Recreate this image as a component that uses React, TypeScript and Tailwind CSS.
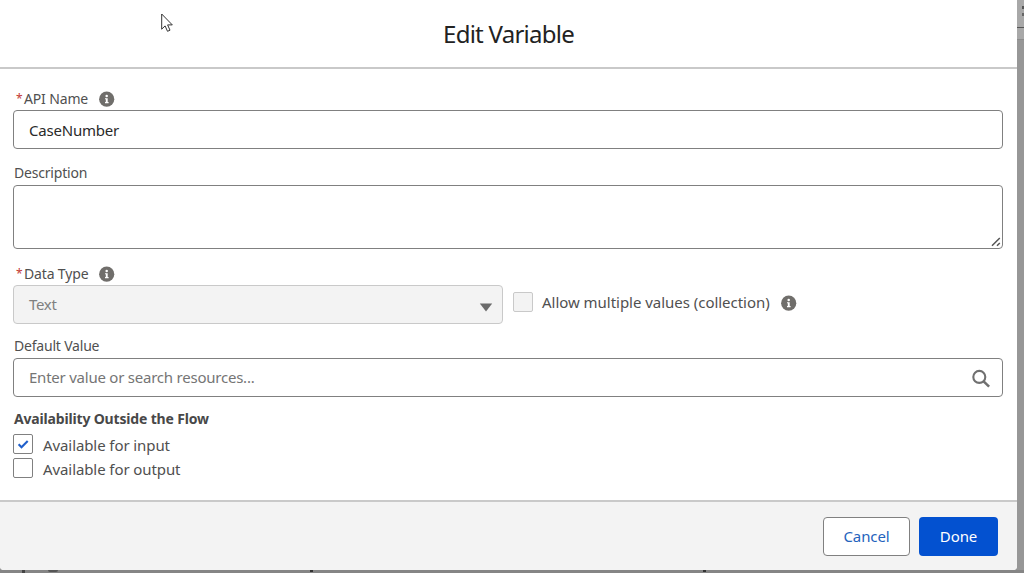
import { useState } from "react";
import type { ReactNode } from "react";

function InfoIcon() {
  return (
    <svg viewBox="0 0 16 16" className="h-4 w-4 shrink-0" aria-hidden="true">
      <circle cx="7.7" cy="8.2" r="7.6" fill="#706e6b" />
      <circle cx="7.7" cy="5" r="1.25" fill="#fff" />
      <path d="M6 7.2h2.7v3.9h.9v1.1H6v-1.1h.8V8.3H6z" fill="#fff" />
    </svg>
  );
}

function FieldLabel({
  children,
  required,
  info,
  className,
}: {
  children: ReactNode;
  required?: boolean;
  info?: boolean;
  className: string;
}) {
  return (
    <div className={`flex items-center text-sm text-[#505050] ${className}`}>
      {required && <span className="ml-[3px] w-2 text-xs text-[#c23934]">*</span>}
      <span className={`w-[75px] whitespace-nowrap ${required ? "" : "ml-px"}`}>{children}</span>
      {info && <InfoIcon />}
    </div>
  );
}

function CheckBox({
  checked,
  disabled,
  onChange,
}: {
  checked: boolean;
  disabled?: boolean;
  onChange?: () => void;
}) {
  return (
    <button
      type="button"
      role="checkbox"
      aria-checked={checked}
      disabled={disabled}
      onClick={onChange}
      className={[
        "flex h-5 w-5 shrink-0 items-center justify-center rounded-[2px] border",
        disabled ? "border-[#c9c9c9] bg-[#f3f3f3]" : "border-[#808080] bg-white",
      ].join(" ")}
    >
      {checked && (
        <svg viewBox="0 0 12 10" className="h-[10px] w-3" fill="none">
          <path d="M1.6 5.3 4.5 8.2 10.7 2" stroke="#1f5fcb" strokeWidth="2.1" />
        </svg>
      )}
    </button>
  );
}

export default function App() {
  const [name, setName] = useState("CaseNumber");
  const [description, setDescription] = useState("");
  const [defaultValue, setDefaultValue] = useState("");
  const [forInput, setForInput] = useState(true);
  const [forOutput, setForOutput] = useState(false);

  return (
    <div className="relative h-[573px] w-[1024px] overflow-hidden bg-[#979797] font-['Noto_Sans','Open_Sans',sans-serif]">
      {/* page behind the dialog */}
      <div className="absolute right-0 top-0 h-[40px] w-[7px] border-b border-[#8c8c8c] bg-[#a8a8a8]">
        <div className="absolute right-0 top-[6px] h-[3px] w-[2px] bg-[#555]" />
        <div className="absolute right-0 top-[13px] h-[3px] w-[2px] bg-[#666]" />
        <div className="absolute right-0 top-[27px] h-px w-[7px] bg-[#555]" />
      </div>
      <div className="absolute bottom-0 left-0 h-[3px] w-full bg-[#858585]">
        <div className="absolute left-[22px] top-0 h-[3px] w-[3px] bg-[#444]" />
        <div className="absolute left-[48px] top-0 h-[2px] w-[10px] rounded-b bg-[#555]" />
        <div className="absolute left-[310px] top-0 h-[2px] w-[3px] bg-[#333]" />
        <div className="absolute left-[703px] top-0 h-[2px] w-[3px] bg-[#333]" />
      </div>

      <div className="relative flex h-[570px] w-[1017px] flex-col overflow-hidden rounded-b-[4px] bg-white">
        <header className="flex h-[69px] shrink-0 items-center justify-center border-b-2 border-[#c9c9c9]">
          <h2 className="text-2xl tracking-[-0.75px] text-[#222]">Edit Variable</h2>
        </header>

        <main className="flex grow flex-col pl-[13px] pr-[14px] pt-[18px]">
          <FieldLabel required info className="h-[23px]">
            <span className="tracking-[-0.15px]">API Name</span>
          </FieldLabel>
          <input
            value={name}
            onChange={(e) => setName(e.target.value)}
            className="h-[39px] rounded-[4px] border border-[#808080] px-[15px] text-[15px] tracking-[-0.2px] text-[#2a2a2a] outline-none"
          />

          <FieldLabel className="mt-3 h-6">
            <span className="tracking-[-0.2px]">Description</span>
          </FieldLabel>
          <div className="relative h-16">
            <textarea
              value={description}
              onChange={(e) => setDescription(e.target.value)}
              className="block h-16 w-full resize-none rounded-[4px] border border-[#808080] px-[15px] py-2 text-[15px] outline-none"
            />
            <svg viewBox="0 0 10 10" className="absolute bottom-[2px] right-[2px] h-[10px] w-[10px]" fill="none">
              <path d="M1 8.8 8.8 1M6 8.8l2.8-2.8" stroke="#555" strokeWidth="1.5" />
            </svg>
          </div>

          <div className="mt-[14px] flex h-[61px]">
            <div className="w-[490px]">
              <FieldLabel required info className="h-[22px]">
                <span className="tracking-[-0.15px]">Data Type</span>
              </FieldLabel>
              <div className="flex h-[39px] items-center justify-between rounded-[4px] border border-[#c9c9c9] bg-[#f3f3f3] pl-[15px] pr-[9px] text-[15px] text-[#808080]">
                <span className="tracking-[-0.3px]">Text</span>
                <svg viewBox="0 0 14 9" className="mt-[5px] h-[9px] w-[14px]">
                  <path d="M.8.5h12.4L7 8.5z" fill="#6b6b6b" />
                </svg>
              </div>
            </div>
            <div className="ml-[10px] mt-[29px] flex h-5 items-center">
              <CheckBox checked={false} disabled />
              <span className="ml-[9px] mt-px w-[239px] whitespace-nowrap text-[15px] tracking-[-0.03px] text-[#505050]">
                Allow multiple values (collection)
              </span>
              <div className="mt-[2px]">
                <InfoIcon />
              </div>
            </div>
          </div>

          <FieldLabel className="mt-[10px] h-6">
            <span className="tracking-[-0.2px]">Default Value</span>
          </FieldLabel>
          <div className="flex h-[39px] items-center rounded-[4px] border border-[#808080] pl-[15px] pr-[11px]">
            <input
              value={defaultValue}
              onChange={(e) => setDefaultValue(e.target.value)}
              placeholder="Enter value or search resources..."
              className="grow text-[15px] tracking-[-0.23px] text-[#181818] outline-none placeholder:text-[#757575]"
            />
            <svg viewBox="0 0 20 20" className="mt-[3px] h-5 w-5" fill="none" stroke="#707070">
              <circle cx="8.3" cy="7.9" r="6" strokeWidth="2.1" />
              <path d="m12.6 12.3 5.5 5.4" strokeWidth="2.5" />
            </svg>
          </div>

          <h3 className="ml-px mt-[11px] h-[22px] text-sm leading-[22px] font-bold tracking-[-0.17px] text-[#484848]">
            Availability Outside the Flow
          </h3>
          <div className="mt-1 flex h-5 items-center">
            <CheckBox checked={forInput} onChange={() => setForInput(!forInput)} />
            <span className="ml-[10px] mt-[3px] text-[15px] tracking-[-0.09px] text-[#505050]">Available for input</span>
          </div>
          <div className="mt-1 flex h-5 items-center">
            <CheckBox checked={forOutput} onChange={() => setForOutput(!forOutput)} />
            <span className="ml-[10px] mt-[3px] text-[15px] tracking-[-0.09px] text-[#505050]">Available for output</span>
          </div>
        </main>

        <footer className="flex h-[70px] shrink-0 justify-end gap-[9px] border-t-2 border-[#c9c9c9] bg-[#f3f3f3] pr-[19px] pt-[15px] text-[15px]">
          <button type="button" className="h-[39px] w-[87px] rounded-[4px] border border-[#808080] bg-white tracking-[-0.1px] text-[#2463bd]">
            Cancel
          </button>
          <button type="button" className="h-[39px] w-[79px] rounded-[4px] bg-[#0351d0] tracking-[-0.1px] text-white">
            Done
          </button>
        </footer>
      </div>

      {/* mouse pointer */}
      <svg viewBox="0 0 12 20" className="absolute left-[161px] top-[13px] h-5 w-3">
        <path d="M.7 1v15.2l3.4-3.3 2.4 5.4 2.5-1.1-2.4-5.3h4.7z" fill="#fff" stroke="#333" strokeWidth="1" />
      </svg>
    </div>
  );
}
